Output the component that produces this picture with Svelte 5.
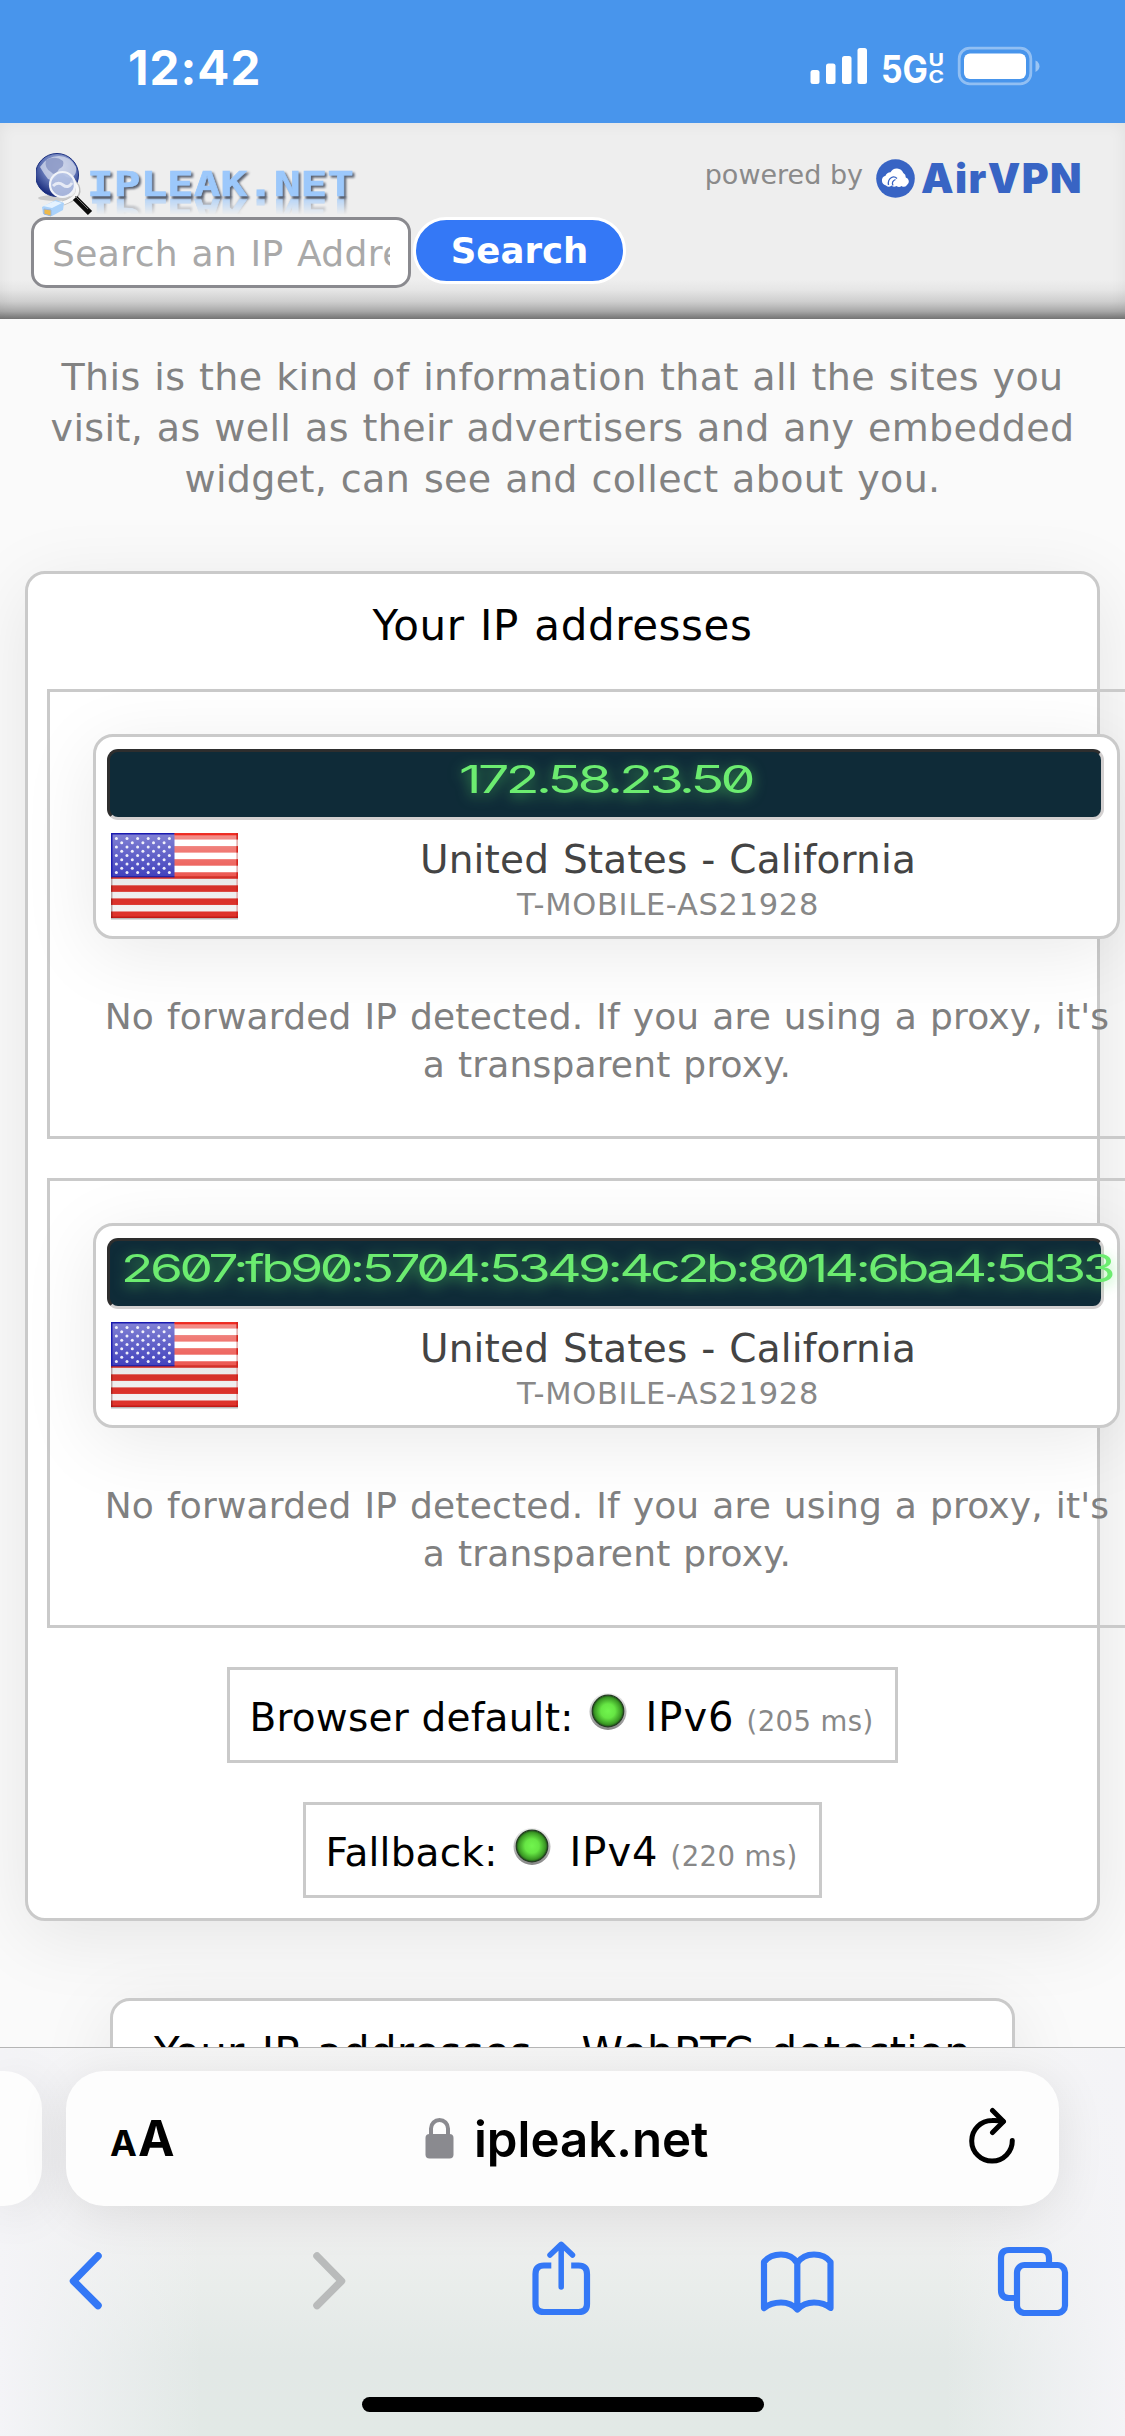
<script>
  const addresses = [
    { ip: '172.58.23.50', width: 293, place: 'United States - California', isp: 'T-MOBILE-AS21928' },
    { ip: '2607:fb90:5704:5349:4c2b:8014:6ba4:5d33', width: 991, place: 'United States - California', isp: 'T-MOBILE-AS21928' }
  ];
  const checks = [
    { label: 'Browser default:', version: 'IPv6', time: '(205 ms)' },
    { label: 'Fallback:', version: 'IPv4', time: '(220 ms)' }
  ];
  const stripes = [0, 1, 2, 3, 4, 5, 6];
  const stars = [];
  for (let r = 0; r < 9; r++) {
    for (let c = 0; c < (r % 2 ? 5 : 6); c++) stars.push([5.4 + c * 10.6 + (r % 2 ? 5.3 : 0), 5.4 + r * 4.27]);
  }
</script>

<div class="screen">
  <div class="status">
    <span class="time">12:42</span>
    <svg class="signals" width="240" height="50" viewBox="800 40 240 50">
      <g fill="#fff">
        <rect x="810.5" y="70" width="9" height="14" rx="2.5" />
        <rect x="826" y="63.5" width="9.5" height="20.5" rx="2.5" />
        <rect x="842" y="56" width="9.5" height="28" rx="2.5" />
        <rect x="857.5" y="48" width="9.5" height="36" rx="2.5" />
        <g font-family="Inter, sans-serif" font-weight="700">
          <text x="881" y="82.500" font-size="38" textLength="47" lengthAdjust="spacingAndGlyphs">5G</text>
          <text x="928.600" y="66" font-size="17" textLength="15.500" lengthAdjust="spacingAndGlyphs">U</text>
          <text x="928.400" y="82.500" font-size="17" textLength="15.500" lengthAdjust="spacingAndGlyphs">C</text>
        </g>
        <rect x="964" y="53.500" width="62" height="25.500" rx="6" />
        <path d="M1035.500 60.500q4 2 4 5.700t-4 5.700z" opacity=".45" />
      </g>
      <rect x="959.200" y="48.200" width="71.600" height="35.600" rx="10.500" fill="none" stroke="#fff" stroke-opacity=".4" stroke-width="2.800" />
    </svg>
  </div>

  <header>
    <div class="left">
      <div class="logo">
        <svg width="57" height="64" viewBox="0 0 57 64">
          <defs>
            <radialGradient id="globe" cx=".55" cy=".3" r=".7">
              <stop offset="0" stop-color="#b9c3e2" /><stop offset=".55" stop-color="#6478b8" /><stop offset="1" stop-color="#16287a" />
            </radialGradient>
          </defs>
          <ellipse cx="20" cy="45" rx="18" ry="3" fill="#000" opacity=".15" />
          <circle cx="21" cy="22" r="21.500" fill="url(#globe)" stroke="#1b3080" stroke-width="1" />
          <path d="M4 14Q11 3 23 3q11 0 17 11 1 6-3 10-6 2-9-2-5-3-8 2-3 5-8 2-4-5-8-12z" fill="#d5dcee" opacity=".75" />
          <path d="M10 7q10-5 17 1 2 5-4 8-4 8-8 3-7-4-5-12z" fill="#8592c2" opacity=".8" />
          <path d="M27 50Q46 44 41 33L36 27" fill="none" stroke="#bdbdbd" stroke-width="5" />
          <path d="M27 50Q45 44 40.500 33L36 27" fill="none" stroke="#f7f7f7" stroke-width="3.500" />
          <circle cx="26.500" cy="31.500" r="12.500" fill="#b6c3e4" fill-opacity=".9" stroke="#f1f3f8" stroke-width="2.200" />
          <path d="M17 33q5-5 10-1t9-2" fill="none" stroke="#fff" stroke-width="3" opacity=".7" />
          <path d="M39 45L54 60" stroke="#0b0b0b" stroke-width="6" />
          <path d="M39 43l13 13" stroke="#777" stroke-width="1" />
          <path d="M6 54L20 47l8 3 -1 7L16 63 7 61z" fill="#a9d1fa" />
          <path d="M7 53l12-5 7 2-10 5z" fill="#e4f2ff" />
          <path d="M8 56l7 1v6l-7-2z" fill="#eeb94a" stroke="#9cb6d8" stroke-width="1" />
        </svg>
        <svg class="wordmark" width="268" height="31" viewBox="0 0 268 31">
          <text x="-5" y="28" textLength="267" lengthAdjust="spacingAndGlyphs">IPLEAK.NET</text>
        </svg>
      </div>
      <div class="search">
        <div class="field"><span>Search an IP Address</span></div>
        <button>Search</button>
      </div>
    </div>
    <div class="powered">
      <span class="by">powered by</span>
      <svg width="39" height="39" viewBox="0 0 39 39">
        <circle cx="19.500" cy="19.500" r="19.300" fill="#3864c4" />
        <path d="M10 26.500a5 5 0 0 1-.5-9.700 5.500 5.500 0 0 1 5-3.500 7 7 0 0 1 12.800.7 5 5 0 0 1 2.500 4.500 4.300 4.300 0 0 1 1 7.800 4 4 0 0 1-5.300.7 4 4 0 0 1-5 0 4 4 0 0 1-5-.5 4 4 0 0 1-5.500 0z" fill="#fff" />
        <path d="M12.500 26q-1-5 3-7.500 3-1.500 5.500 1M17 26.500q-2-4 2.500-6" fill="none" stroke="#3864c4" stroke-width="1.300" />
      </svg>
      <span class="brand">AirVPN</span>
    </div>
  </header>

  <main>
    <p class="intro">This is the kind of information that all the sites you visit, as well as their advertisers and any embedded widget, can see and collect about you.</p>

    <section class="panel">
      <h2>Your IP addresses</h2>
      {#each addresses as a}
        <div class="box">
          <div class="card">
            <div class="bar" class:long={a.width > 900}>
              <svg class="ip" width={a.width} height="48" viewBox="0 0 {a.width} 48">
                <text x="0" y="41" textLength={a.width} lengthAdjust="spacingAndGlyphs">{a.ip}</text>
              </svg>
            </div>
            <div class="info">
              <svg width="127" height="87" viewBox="0 0 127 87">
                <defs>
                  <linearGradient id="gloss" x1="0" y1="0" x2="0" y2="1">
                    <stop offset="0" stop-color="#fff" stop-opacity=".45" /><stop offset=".5" stop-color="#fff" stop-opacity=".18" />
                    <stop offset=".52" stop-color="#000" stop-opacity=".09" /><stop offset="1" stop-color="#000" stop-opacity=".04" />
                  </linearGradient>
                </defs>
                <rect y="1" width="127" height="85.500" fill="#777" opacity=".5" />
                <rect width="127" height="85" fill="#fff" />
                {#each stripes as s}
                  <rect y={s * 13.08} width="127" height="6.540" fill="#e8352d" />
                {/each}
                <rect width="63.500" height="44.300" fill="#1a1ab0" />
                <rect x="1.500" y="1.500" width="124" height="82" fill="url(#gloss)" />
                {#each stars as s}
                  <circle cx={s[0]} cy={s[1]} r="1.500" fill="#fff" opacity=".9" />
                {/each}
                <rect x="63.500" y=".7" width="63" height="1.600" fill="#f02a20" />
                <rect x="125.300" y="0" width="1.700" height="85" fill="#a00" opacity=".3" />
                <rect y="44" width="1.500" height="41" fill="#300" opacity=".35" />
                <rect y="83.500" width="127" height="1.500" fill="#900" opacity=".5" />
              </svg>
              <div class="where">
                <div class="place">{a.place}</div>
                <div class="isp">{a.isp}</div>
              </div>
            </div>
          </div>
          <p class="note">No forwarded IP detected. If you are using a proxy, it's a transparent proxy.</p>
        </div>
      {/each}
      {#each checks as c}
        <div class="check">
          <span class="label">{c.label}</span>
          <svg width="38" height="40" viewBox="0 0 38 40">
            <defs>
              <linearGradient id="rim" x1="0" y1="0" x2="0" y2="1"><stop offset="0" stop-color="#f0f0f0" /><stop offset="1" stop-color="#858585" /></linearGradient>
              <radialGradient id="led"><stop offset="0" stop-color="#71f54e" /><stop offset=".45" stop-color="#66e644" /><stop offset=".85" stop-color="#3a9824" /><stop offset="1" stop-color="#1d4a17" /></radialGradient>
            </defs>
            <circle cx="19" cy="19.500" r="18.500" fill="url(#rim)" />
            <circle cx="19" cy="19" r="15.800" fill="url(#led)" stroke="#243c22" stroke-width="1.200" />
          </svg>
          <span class="version">{c.version}</span>
          <span class="ms">{c.time}</span>
        </div>
      {/each}
    </section>

    <section class="panel webrtc">
      <h2>Your IP addresses - WebRTC detection</h2>
    </section>
  </main>

  <footer>
    <div class="tabs">
      <div class="previous"></div>
      <div class="address">
        <span class="aa"><small>A</small>A</span>
        <span class="site">
          <svg width="29" height="41" viewBox="0 0 29 41">
            <rect x=".5" y="16" width="28" height="24.500" rx="4" fill="#8a8a8f" />
            <path d="M6 18V10.500a8.500 8.500 0 0 1 17 0V18" fill="none" stroke="#8a8a8f" stroke-width="4" />
          </svg>
          ipleak.net
        </span>
        <svg class="reload" width="47" height="58" viewBox="0 0 47 58" fill="none" stroke="#000" stroke-width="5" stroke-linecap="round" stroke-linejoin="round">
          <path d="M43.300 33.500A20.300 20.300 0 1 1 23 13.500Q29 13.200 34 14.500" />
          <path d="M23.500 3.500L34.500 14.500 23.500 25.500" />
        </svg>
      </div>
    </div>
    <nav>
      <svg width="41" height="75" viewBox="66 2241 41 75"><path d="M99 2256L74.500 2281 99 2305.500" stroke-width="7.500" /></svg>
      <svg class="forward" width="41" height="75" viewBox="310 2241 41 75"><path d="M318 2256L342.500 2281 318 2305.500" stroke-width="7.500" /></svg>
      <svg class="share" width="64" height="75" viewBox="530 2241 64 75">
        <path d="M552.300 2265.500H545q-8.500 0-8.500 8.500V2304q0 8 8.500 8H579.500q8.500 0 8.500-8V2274q0-8.500-8.500-8.500H572.200" stroke-linecap="butt" />
        <path d="M562.200 2287V2246M551 2255L562.200 2244.300 573.500 2255" stroke-width="5.500" />
      </svg>
      <svg class="book" width="79" height="75" viewBox="759 2241 79 75">
        <path d="M765 2308V2262Q771 2254.500 782 2254.500T798.300 2263Q804 2254.500 815 2254.500T831.500 2262V2308Q825 2302.500 815 2302.500T798.300 2309.500Q792 2302.500 782 2302.500T765 2308zM798.300 2263V2309" />
      </svg>
      <svg class="pages" width="76" height="75" viewBox="996 2241 76 75">
        <path d="M1016 2298H1010q-8 0-8-8V2258q0-8 8-8h32q8 0 8 8v6" stroke-linecap="butt" />
        <rect x="1018" y="2265" width="48" height="48" rx="7.500" />
      </svg>
    </nav>
    <div class="home"></div>
  </footer>
</div>

<style>
  :global(body) { margin: 0; }
  .screen { width: 1125px; height: 2436px; overflow: hidden; display: flex; flex-direction: column; background: #fafafa; font-family: "DejaVu Sans", Verdana, sans-serif; color: #000; }
  .screen * { box-sizing: border-box; }
  svg { display: block; flex: none; }
  p, h2 { margin: 0; font-weight: 400; }

  .status { height: 123px; flex: none; background: #4895ec; display: flex; justify-content: space-between; padding: 0 85px 0 128px; }
  .time { font: 700 47.500px/135px Inter, sans-serif; letter-spacing: 1px; color: #fff; }
  .signals { margin-top: 40px; }

  header { height: 196px; flex: none; display: flex; justify-content: space-between; padding: 30px 43px 0 31px; background: linear-gradient(#eee 80%, #e6e6e6 85%, #cfcfcf 91%, #aaa 96%, #767676); box-shadow: inset 0 0 16px rgba(0, 0, 0, .06); }
  .logo { display: flex; height: 64px; padding-left: 5px; }
  .wordmark { margin: 15px 0 0 -1px; overflow: visible; filter: drop-shadow(2px 2px 1px rgba(40, 50, 70, .75)); font: 700 33px "DejaVu Sans Mono", monospace; fill: #9cc8fb; stroke: #9cc8fb; stroke-width: .6; -webkit-box-reflect: below -3px linear-gradient(transparent 40%, rgba(0, 0, 0, .8)); }
  .search { display: flex; gap: 2px; }
  .field { width: 380px; height: 71px; border: 3px solid #8a8a8f; border-radius: 15px; background: #fff; padding: 0 18px; }
  .field span { display: block; overflow: hidden; white-space: nowrap; font-size: 36px; line-height: 67px; letter-spacing: .4px; word-spacing: 1.500px; color: #a9a9a9; }
  button { width: 213px; height: 67px; border: 3px solid #fff; border-radius: 34px; background: #3478f6; color: #fff; padding: 1px 0 0; font: 700 35.500px/60px "DejaVu Sans", sans-serif; }
  .powered { display: flex; align-items: flex-start; padding-top: 6px; }
  .by { font-size: 27px; line-height: 31px; color: #8a8a8a; margin-right: 13px; }
  .brand { font: 900 41px/39px Inter, sans-serif; letter-spacing: 1.400px; color: #3864c4; margin: 0 -1px 0 6px; }

  main { height: 1728px; flex: none; overflow: hidden; display: flex; flex-direction: column; align-items: center; }
  .intro { width: 1060px; flex: none; padding: 33px 0 66px; font-size: 38px; line-height: 51px; letter-spacing: .35px; word-spacing: 1.300px; text-align: center; color: #828282; }
  .panel { width: 1075px; height: 1350px; flex: none; border: 3px solid #cacaca; border-radius: 20px; background: #fff; box-shadow: 0 15px 75px rgba(0, 0, 0, .085); display: flex; flex-direction: column; align-items: center; }
  h2 { padding: 27px 0 38px; font-size: 42px; line-height: 50px; letter-spacing: .6px; word-spacing: 1.500px; text-align: center; white-space: nowrap; }
  .box { width: 1116px; height: 450px; flex: none; align-self: flex-start; margin: 0 0 39px 19px; border: 3px solid #cacaca; padding: 42px 40px 0 43px; }
  .card { width: 1027px; height: 205px; border: 3px solid #cacaca; border-radius: 20px; padding: 12px 11px 0; background: #fff; box-shadow: 0 15px 75px rgba(0, 0, 0, .085); }
  .bar { width: 997px; height: 71px; border: 3px solid; border-color: #2e2e2e #d3d0d0 #d3d0d0 #2e2e2e; border-radius: 11px; background: #0f2b38; display: flex; justify-content: center; }
  .long { justify-content: flex-start; padding-left: 11px; }
  .ip { overflow: visible; font: 400 38px Inter, sans-serif; letter-spacing: -2.500px; font-feature-settings: "zero"; fill: #6cec70; filter: drop-shadow(0 3px 7px rgba(90, 230, 100, .6)); }
  .info { display: flex; padding: 13px 0 0 4px; }
  .where { width: 860px; padding-top: 3px; text-align: center; }
  .place { font-size: 39px; line-height: 48px; letter-spacing: .15px; word-spacing: 1.300px; color: #444; }
  .isp { margin-top: 2px; font-size: 30.500px; line-height: 38px; letter-spacing: .7px; color: #888; }
  .note { width: 1028px; padding-top: 54px; font-size: 36px; line-height: 48px; letter-spacing: .19px; word-spacing: 1.200px; text-align: center; color: #808080; }
  .check { height: 96px; flex: none; margin-bottom: 39px; border: 3px solid #cacaca; padding: 0 21px 0 19px; display: flex; align-items: baseline; line-height: 95px; }
  .check svg { align-self: flex-start; margin: 22px 18px 0 16px; }
  .label { font-size: 39px; letter-spacing: .2px; }
  .version { font-size: 40px; letter-spacing: 1px; }
  .ms { font-size: 27.500px; letter-spacing: .4px; color: #888; margin-left: 12px; }
  .webrtc { width: 905px; height: 200px; margin-top: 77px; }
  .webrtc h2 { letter-spacing: .25px; word-spacing: 3.500px; }

  footer { height: 389px; flex: none; overflow: hidden; border-top: 1px solid #b5b5b5; padding-top: 23px; background: linear-gradient(90deg, #f4f4f7, rgba(244, 244, 247, .7) 5%, rgba(244, 244, 247, 0) 18%, rgba(244, 244, 247, 0) 84%, rgba(244, 244, 247, .7) 95%, #f4f4f7), linear-gradient(#f5f5f5, #efefef 45%, #e9edeb 62%, #e2e8e6 80%, #e2e9e6); }
  .tabs { display: flex; gap: 24px; }
  .previous { width: 42px; height: 135px; border-radius: 0 38px 38px 0; background: #fdfdfd; box-shadow: 0 8px 50px rgba(0, 0, 0, .09); }
  .address { width: 993px; height: 135px; border-radius: 38px; background: #fdfdfd; box-shadow: 0 8px 50px rgba(0, 0, 0, .09); display: flex; padding: 0 43px 0 44px; font-family: Inter, sans-serif; line-height: 136px; }
  .aa { width: 62px; font-size: 49px; font-weight: 700; white-space: nowrap; }
  .aa small { font-size: 36px; margin-right: 1px; }
  .site { display: flex; gap: 20px; margin-left: 253px; font-size: 49.200px; font-weight: 600; }
  .site svg { margin-top: 47px; }
  .reload { margin: 36px 0 0 auto; }
  nav { display: flex; padding: 35px 0 0 65px; fill: none; stroke: #3478f6; stroke-width: 6.200; stroke-linecap: round; stroke-linejoin: round; }
  .forward { margin-left: 203px; stroke: #b9bbbb; }
  .share { margin-left: 179px; }
  .book { margin-left: 165px; }
  .pages { margin-left: 158px; }
  .home { width: 402px; height: 15px; margin: 81px auto 0; border-radius: 8px; background: #000; }
</style>
